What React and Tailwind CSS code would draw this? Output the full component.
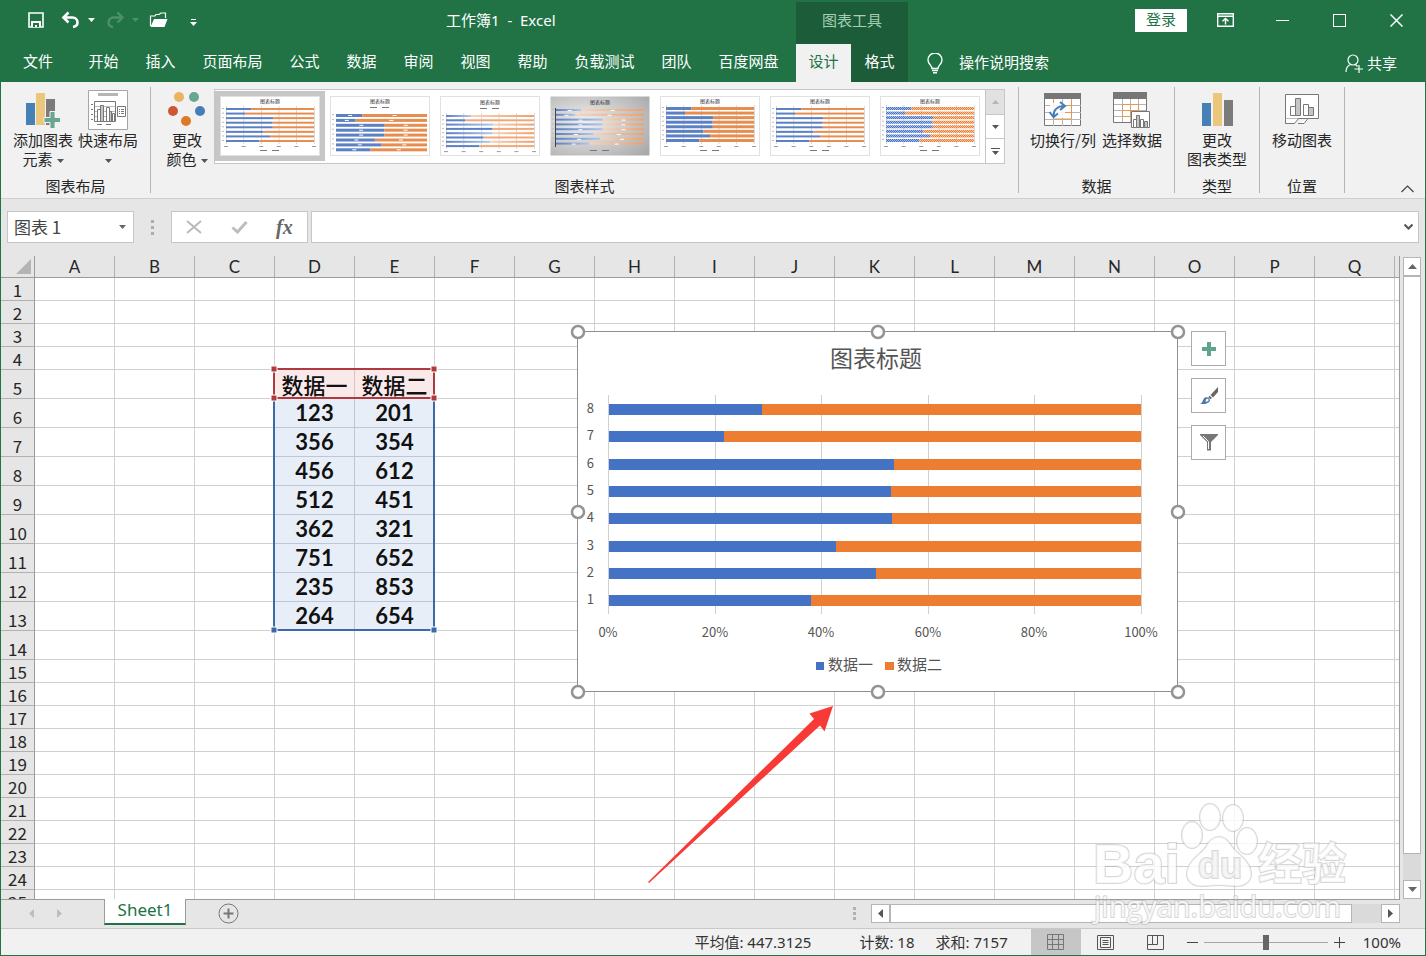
import React from "react";

const SERIES = [
    { id: 1, a: 123, b: 201 },
    { id: 2, a: 356, b: 354 },
    { id: 3, a: 456, b: 612 },
    { id: 4, a: 512, b: 451 },
    { id: 5, a: 362, b: 321 },
    { id: 6, a: 751, b: 652 },
    { id: 7, a: 235, b: 853 },
    { id: 8, a: 264, b: 654 },
];

const REVERSED = [...SERIES].reverse();

const COLUMNS = "ABCDEFGHIJKLMNOPQ".split("");
const ROWS = Array.from({ length: 25 }, (_, i) => i + 1);

const MENU = ["开始", "插入", "页面布局", "公式", "数据", "审阅", "视图", "帮助", "负载测试", "团队", "百度网盘"];

const share = (row) => row.a / (row.a + row.b);

const Caret = ({ className = "" }) => (
    <svg className={className} width="7" height="4" viewBox="0 0 7 4" fill="currentColor" aria-hidden="true">
        <path d="M0 0h7L3.5 4z" />
    </svg>
);

const TitleBar = () => (
    <div className="flex h-11 text-[15px] text-white">
        <div className="flex w-[795px] shrink-0 items-center pb-1 pl-[26px]">
            <button type="button" aria-label="保存" className="w-[18px]">
                <svg width="18" height="18" viewBox="0 0 18 18" fill="none" stroke="currentColor">
                    <path d="M2 2h14v14H2z" strokeWidth="1.600" />
                    <path d="M4 10h10v6H4z" fill="currentColor" stroke="none" />
                    <path d="M6 12h6v4h-2v-2H8v2H6z" fill="#217346" stroke="none" />
                </svg>
            </button>
            <button type="button" aria-label="撤消" className="ml-4 w-5">
                <svg width="20" height="18" viewBox="0 0 20 18" fill="none" stroke="currentColor" strokeWidth="2.600">
                    <path d="M7.500 1.500 2.500 6.500l5 5M3 6.500h8.500a5 5 0 0 1 5 5c0 2.500-1.500 4-4.500 4.500" />
                </svg>
            </button>
            <button type="button" aria-label="撤消选项" className="ml-[5px] flex w-2.5 justify-center">
                <Caret />
            </button>
            <button type="button" aria-label="恢复" className="ml-[9px] w-5 text-[#4d8f6b]">
                <svg width="20" height="18" viewBox="0 0 20 18" fill="none" stroke="currentColor" strokeWidth="2.400">
                    <path d="m12.500 1.500 5 5-5 5M17 6.500H8.500a5 5 0 0 0-5 5c0 2.500 1.500 4 4.500 4.500" />
                </svg>
            </button>
            <button type="button" aria-label="恢复选项" className="ml-[5px] flex w-2.5 justify-center text-[#4d8f6b]">
                <Caret />
            </button>
            <button type="button" aria-label="打开" className="ml-[9px] w-5">
                <svg width="20" height="18" viewBox="0 0 20 18" fill="none" stroke="currentColor" strokeWidth="1.200">
                    <path d="M1.500 15V5h4.500l1-1.500h3L12 2h4.500v5" />
                    <path d="M5 8h13.500l-3 8H1.500z" fill="currentColor" stroke="none" />
                </svg>
            </button>
            <button type="button" aria-label="自定义快速访问工具栏" className="ml-[19px] mt-1 flex w-2.5 flex-col items-center gap-0.5">
                <span className="h-px w-[5px] bg-white" />
                <Caret />
            </button>
            <h1 className="ml-[248px] whitespace-pre font-['Noto_Sans','Noto_Sans_CJK_SC',sans-serif]">{"工作簿1  -  Excel"}</h1>
        </div>
        <div className="mt-0.5 flex w-28 shrink-0 items-center justify-center bg-[#1c5c38] pb-1.5 text-[#a3cfb5]">图表工具</div>
        <div className="flex flex-1 items-center justify-end pb-1">
            <button type="button" className="mr-2.5 h-[23px] w-[52px] bg-white pb-0.5 leading-5 text-[#217346]">登录</button>
            <button type="button" aria-label="功能区显示选项" className="flex w-[57px] justify-center">
                <svg width="17" height="14" viewBox="0 0 17 14" fill="none" stroke="currentColor" strokeWidth="1.400">
                    <path d="M.7.700h15.600v12.600H.7zM.7 3.300h15.600M8.500 11.500V5.500M5.500 8.300l3-2.900 3 2.900" />
                </svg>
            </button>
            <button type="button" aria-label="最小化" className="flex w-[57px] justify-center">
                <span className="h-px w-[13px] bg-white" />
            </button>
            <button type="button" aria-label="最大化" className="flex w-[57px] justify-center">
                <span className="size-[13px] border border-white" />
            </button>
            <button type="button" aria-label="关闭" className="flex w-[57px] justify-center">
                <svg width="13" height="13" viewBox="0 0 13 13" stroke="currentColor" strokeWidth="1.500">
                    <path d="m.5.500 12 12M12.500.500l-12 12" />
                </svg>
            </button>
        </div>
    </div>
);

const MenuBar = () => (
    <nav className="flex h-[38px] text-[15px] text-white">
        <div className="flex w-[795px] shrink-0 pb-[3px]">
            <button type="button" className="w-[74px]">文件</button>
            {MENU.map((name) => (
                <button key={name} type="button" className={name.length > 2 ? "w-[87px]" : "w-[57px]"}>
                    {name}
                </button>
            ))}
        </div>
        <div className="flex w-28 shrink-0 bg-[#1c5c38]">
            <button type="button" className="w-[55px] bg-[#f1f1f1] pb-[3px] text-[#217346]">设计</button>
            <button type="button" className="flex-1 pb-[3px]">格式</button>
        </div>
        <div className="flex flex-1 items-center pl-[19px] pr-7">
            <svg width="16" height="21" viewBox="0 0 16 21" fill="none" stroke="currentColor" strokeWidth="1.400" aria-hidden="true">
                <path d="M5 15.500c0-3-4-4.500-4-8.500a7 7 0 0 1 14 0c0 4-4 5.500-4 8.500zM5 17.500h6M6 19.800h4" />
            </svg>
            <input
                type="text"
                aria-label="操作说明搜索"
                placeholder="操作说明搜索"
                className="ml-4 w-40 bg-transparent pb-0.5 outline-none placeholder:text-white"
            />
            <button type="button" className="ml-auto flex items-center gap-1">
                <svg width="18" height="19" viewBox="0 0 18 19" fill="none" stroke="currentColor" strokeWidth="1.200" aria-hidden="true">
                    <circle cx="8" cy="6" r="5" />
                    <path d="M1 18c0-4 2-6.500 4.500-7.500M10.500 10.500l2 2M14 11v8M9.500 15h8.500" />
                </svg>
                共享
            </button>
        </div>
    </nav>
);

const Thumb = ({ top = 13, step = 5, height = 2, titleY = 7, legendY = 56, axis = true, fill = "solid", labels = false, right = 94 }) => {
    const width = right - 6;
    const blue = fill === "hatch" ? "url(#hatchBlue)" : fill === "fade" || fill === "steel" ? "url(#fadeBlue)" : "#5b80c4";
    const orange = fill === "hatch" ? "url(#hatchOrange)" : fill === "fade" || fill === "steel" ? "url(#fadeOrange)" : "#e88d50";
    return (
        <svg width="100" height="60" viewBox="0 0 100 60" aria-hidden="true">
            <rect x="0.500" y="0.500" width="99" height="59" fill={fill === "steel" ? "url(#steel)" : "#fff"} stroke={fill === "steel" ? "none" : "#e1e1e1"} />
            {axis && [0, 1, 2, 3, 4, 5].map((n) => (
                <g key={n}>
                    <rect x={6 + (width / 5) * n} y={top - 2} width="0.500" height={step * 7 + height + 4} fill="#b5b5b5" />
                    <rect x={4 + (width / 5) * n} y={top + step * 7 + height + 4} width="4" height="1" fill="#999" />
                </g>
            ))}
            {fill === "steel" && <rect x="5" y="12" width="1" height="39" fill="#444" />}
            {REVERSED.map((row, i) => {
                const y = top + i * step;
                const cut = width * share(row);
                return (
                    <g key={row.id}>
                        <rect x="2" y={y} width="2" height="1" fill="#bbb" />
                        <rect x="6" y={y} width={cut} height={height} fill={fill === "fade" && i % 2 ? "#5b80c4" : blue} />
                        <rect x={6 + cut} y={y} width={width - cut} height={height} fill={fill === "fade" && i % 2 ? "#f0a878" : orange} />
                        {labels && (
                            <>
                                <rect x={5 + cut / 2} y={y + 1} width="4" height="1" fill="#fff" />
                                <rect x={4 + (cut + width) / 2} y={y + 1} width="4" height="1" fill="#fff" />
                            </>
                        )}
                    </g>
                );
            })}
            <text x="50" y={titleY} fontSize="5" textAnchor="middle" fill="#333">图表标题</text>
            <rect x="40" y={legendY - 2} width="7" height="1" fill="#777" />
            <rect x="52" y={legendY - 2} width="7" height="1" fill="#777" />
        </svg>
    );
};

const THUMBS = [
    { top: 12, step: 4.570, height: 2 },
    { top: 18, step: 4.900, height: 3, legendY: 13, axis: false, labels: true, right: 97 },
    { top: 19, step: 4.300, height: 2, titleY: 8, legendY: 14, fill: "fade" },
    { top: 13, step: 4.800, height: 2, titleY: 8, fill: "steel", axis: false, labels: true },
    { top: 11, step: 4.570, height: 3 },
    { top: 12, step: 4.570, height: 2 },
    { top: 11, step: 4.570, height: 3, fill: "hatch" },
];

const RibbonGroup = ({ title, className = "", children }) => (
    <section className={`flex shrink-0 flex-col border-r border-[#b5b5b5] pt-0.5 ${className}`}>
        <div className="flex flex-1 items-start justify-center">{children}</div>
        <h2 className="text-center leading-[14px]">{title}</h2>
    </section>
);

const RibbonButton = ({ icon, lines, caret = false, className = "w-[62px]" }) => (
    <button type="button" className={`flex shrink-0 flex-col items-center ${className}`}>
        <span className="flex h-[41px] items-center justify-center">{icon}</span>
        {lines.map((line, i) => (
            <span key={line} className="flex h-[19px] items-center gap-1 whitespace-nowrap leading-[19px]">
                {line}
                {caret && i === lines.length - 1 && <Caret className="mt-1 text-[#555]" />}
            </span>
        ))}
    </button>
);

const AddElementIcon = () => (
    <svg width="34" height="38" viewBox="0 0 34 38">
        <path fill="#4680b5" d="M0 12h9v22H0z" />
        <path fill="#ebc77c" d="M10 2h9v32h-9z" />
        <path fill="#7b7b7b" d="M20 8h9v26h-9z" />
        <path fill="#69a690" stroke="#f1f1f1" d="M24 20.500h5v6h5.500v5H29v6h-5v-6h-6v-5h6z" />
    </svg>
);

const QuickLayoutIcon = () => (
    <svg width="40" height="40" viewBox="0 0 40 40" fill="none" stroke="#777">
        <path fill="#fff" stroke="#a5a5a5" d="M.5.500h39v39H.5z" />
        <path fill="#b5b5b5" stroke="none" d="M10 3h20v3H10z" />
        <path d="M6.500 11.500h21v20h-21zM3 14.500h2M3 19.500h2M3 24.500h2M3 29.500h2M9 34.500h5M18 34.500h5" />
        <path stroke="#bbb" d="M7 16.500h20M7 21.500h20M7 26.500h20" />
        <path fill="#fff" d="M9.500 19.500h3v12h-3zM18.500 17.500h3v14h-3zM24.500 23.500h2v8h-2z" />
        <path fill="#c5c5c5" d="M12.500 15.500h3v16h-3zM21.500 21.500h2v10h-2z" />
        <path fill="#fff" d="M29.500 16.500h8v10h-8zM31 19.500h1M33 19.500h3M31 21.500h1M33 21.500h3M31 23.500h1M33 23.500h3" />
    </svg>
);

const ColorsIcon = () => (
    <svg width="38" height="36" viewBox="0 0 38 36">
        <circle cx="11" cy="5" r="5" fill="#e8b45f" />
        <circle cx="26" cy="5" r="5" fill="#69a690" />
        <circle cx="5" cy="19" r="5" fill="#ce5733" />
        <circle cx="32" cy="19" r="5" fill="#457eb8" />
        <circle cx="18" cy="29" r="5" fill="#dc7a28" />
    </svg>
);

const SwitchIcon = () => (
    <svg width="38" height="34" viewBox="0 0 38 34" fill="none">
        <path fill="#fff" stroke="#777" d="M.5.500h36v32H.5z" />
        <path fill="#777" d="M0 0h37v6H0z" />
        <path stroke="#b5b5b5" d="M1 12.500h36M1 19.500h36M1 26.500h36M9.500 6v27M18.500 6v27M27.500 6v27" />
        <path stroke="#e09a55" d="M9.500 6v20h18V6M18.500 19.500h9M18.500 12.500h9" />
        <path fill="#fff" d="M6 10h15v15H6z" opacity="0.850" />
        <path stroke="#457eb8" strokeWidth="2" d="M9.500 23c0-6 4-10 11-10M16 9l5 4-5 4M5.500 19l4 5 4.500-3.500" />
    </svg>
);

const SelectDataIcon = () => (
    <svg width="38" height="38" viewBox="0 0 38 38" fill="none">
        <path fill="#fff" stroke="#777" d="M.5 1.500h33v30H.5z" />
        <path fill="#777" d="M0 1h34v7H0z" />
        <path stroke="#b5b5b5" d="M1 13.500h32M1 19.500h32M1 25.500h32M9.500 8v23M17.500 8v23M25.500 8v23" />
        <path stroke="#e09a55" d="M9.500 13.500h16v6h-16zM9.500 19.500v6h8M17.500 13.500v12" />
        <path fill="#fff" stroke="#777" d="M18.500 20.500h18v16h-18z" />
        <path fill="#fff" stroke="#777" d="M20.500 28.500h3v8h-3zM27.500 28.500h3v8h-3z" />
        <path fill="#c5c5c5" stroke="#777" d="M23.500 24.500h3v12h-3zM31.500 30.500h3v6h-3z" />
    </svg>
);

const ChangeTypeIcon = () => (
    <svg width="31" height="34" viewBox="0 0 31 34">
        <path fill="#4680b5" d="M0 10h9v23H0z" />
        <path fill="#ebc77c" d="M11 0h9v33h-9z" />
        <path fill="#7b7b7b" d="M22 7h9v26h-9z" />
    </svg>
);

const MoveChartIcon = () => (
    <svg width="34" height="31" viewBox="0 0 34 31" fill="none" stroke="#777">
        <path fill="#fff" d="M.5.500h33v24H.5z" />
        <path fill="#fff" d="M5.500 12.500h5v9h-5zM18.500 10.500h5v11h-5z" />
        <path fill="#c5c5c5" d="M10.500 4.500h5v17h-5zM23.500 13.500h5v8h-5z" />
        <path fill="#fff" d="M.5 24.500v5h9l4-5M13 29.500h6l4-5" />
    </svg>
);

const Ribbon = () => (
    <div className="flex h-[117px] border-b border-[#cfcfcf] bg-[#f1f1f1] py-[5px] text-[15px] text-[#262626]">
        <RibbonGroup title="图表布局" className="w-[150px]">
            <div className="flex gap-[3px]">
                <RibbonButton icon={<AddElementIcon />} lines={["添加图表", "元素"]} caret />
                <RibbonButton icon={<QuickLayoutIcon />} lines={["快速布局", ""]} caret />
            </div>
        </RibbonGroup>
        <RibbonGroup title="图表样式" className="w-[868px]">
            <div className="flex pr-1">
                <RibbonButton icon={<ColorsIcon />} lines={["更改", "颜色"]} caret className="w-[54px]" />
                <div className="flex h-[75px] border border-[#c6c6c6] bg-white">
                    <div className="flex pt-px">
                        {THUMBS.map((item, i) => (
                            <button
                                key={i}
                                type="button"
                                aria-label={`样式 ${i + 1}`}
                                className={`h-[70px] w-[110px] p-[5px] ${i === 0 ? "bg-[#c6c6c6]" : ""}`}
                            >
                                <Thumb {...item} />
                            </button>
                        ))}
                    </div>
                    <div className="flex w-[19px] flex-col border-l border-[#c6c6c6] text-[#555]">
                        <button type="button" aria-label="上一行" className="flex flex-1 items-center justify-center bg-[#e1e1e1] text-[#b5b5b5]">
                            <Caret className="rotate-180" />
                        </button>
                        <button type="button" aria-label="下一行" className="flex flex-1 items-center justify-center border-y border-[#c6c6c6]">
                            <Caret />
                        </button>
                        <button type="button" aria-label="更多样式" className="flex flex-1 flex-col items-center justify-center gap-0.5">
                            <span className="h-px w-[9px] bg-[#555]" />
                            <Caret />
                        </button>
                    </div>
                </div>
            </div>
        </RibbonGroup>
        <RibbonGroup title="数据" className="w-[156px]">
            <div className="flex gap-[5px]">
                <RibbonButton icon={<SwitchIcon />} lines={["切换行/列"]} className="w-[66px]" />
                <RibbonButton icon={<SelectDataIcon />} lines={["选择数据"]} />
            </div>
        </RibbonGroup>
        <RibbonGroup title="类型" className="w-[85px]">
            <RibbonButton icon={<ChangeTypeIcon />} lines={["更改", "图表类型"]} />
        </RibbonGroup>
        <RibbonGroup title="位置" className="w-[85px]">
            <RibbonButton icon={<MoveChartIcon />} lines={["移动图表"]} />
        </RibbonGroup>
        <button type="button" aria-label="折叠功能区" className="ml-auto mr-[11px] self-end">
            <svg width="13" height="8" viewBox="0 0 13 8" fill="none" stroke="#444" strokeWidth="1.200">
                <path d="m.5 7 6-6 6 6" />
            </svg>
        </button>
    </div>
);

const FormulaBar = () => (
    <div className="flex h-[57px] items-start bg-[#e6e6e6] pl-1.5 pr-1.5 pt-3">
        <div className="flex h-8 w-[127px] items-center border border-[#c6c6c6] bg-white pl-1.5 pr-[7px]">
            <input aria-label="名称框" defaultValue="图表 1" className="w-full min-w-0 text-[17px] text-[#444] outline-none" />
            <button type="button" aria-label="名称列表">
                <Caret className="text-[#666]" />
            </button>
        </div>
        <div className="flex h-8 w-[37px] flex-col items-center justify-center gap-[3px]">
            <span className="size-[3px] bg-[#adadad]" />
            <span className="size-[3px] bg-[#adadad]" />
            <span className="size-[3px] bg-[#adadad]" />
        </div>
        <div className="flex h-8 w-[137px] items-center justify-around border border-[#c6c6c6] bg-white">
            <button type="button" aria-label="取消">
                <svg width="16" height="14" viewBox="0 0 16 14" stroke="#b9b9b9" strokeWidth="2">
                    <path d="m1 1 14 12M15 1 1 13" />
                </svg>
            </button>
            <button type="button" aria-label="输入">
                <svg width="17" height="13" viewBox="0 0 17 13" fill="none" stroke="#bdbdbd" strokeWidth="3">
                    <path d="m1.500 6.500 5 4.500 9-10" />
                </svg>
            </button>
            <button type="button" aria-label="插入函数" className="font-['Liberation_Serif',serif] text-[20px] font-bold italic leading-6 text-[#666]">fx</button>
        </div>
        <div className="ml-[3px] flex h-8 flex-1 items-center border border-[#c6c6c6] bg-white pr-[5px]">
            <input aria-label="编辑栏" className="h-full flex-1 px-2 outline-none" />
            <button type="button" aria-label="展开编辑栏">
                <svg width="9" height="6" viewBox="0 0 9 6" fill="none" stroke="#555" strokeWidth="2">
                    <path d="m.5.500 4 4 4-4" />
                </svg>
            </button>
        </div>
    </div>
);

const cellContent = (row, col) => {
    if (row === 5) return col === "D" ? "数据一" : "数据二";
    const item = SERIES[row - 6];
    return col === "D" ? item.a : item.b;
};

const Sheet = () => (
    <table className="w-full table-fixed border-separate border-spacing-0">
        <colgroup>
            <col className="w-[34px]" />
            {COLUMNS.map((col) => (
                <col key={col} className="w-20" />
            ))}
            <col />
        </colgroup>
        <thead>
            <tr className="bg-[#e6e6e6] text-[17px] leading-5 text-[#262626]">
                <th className="h-[22px] border-b border-r border-[#9b9b9b] p-0">
                    <svg className="ml-auto mr-[3px]" width="15" height="15" viewBox="0 0 15 15" aria-hidden="true">
                        <path fill="#b4b4b4" d="M15 0v15H0z" />
                    </svg>
                </th>
                {COLUMNS.map((col) => (
                    <th key={col} scope="col" className="h-[22px] border-b border-r border-b-[#9b9b9b] border-r-[#b1b1b1] p-0 align-bottom font-['Lato',sans-serif] font-normal">
                        {col}
                    </th>
                ))}
                <th className="h-[22px] border-b border-[#9b9b9b] p-0" />
            </tr>
        </thead>
        <tbody>
            {ROWS.map((row) => {
                const tall = row >= 5 && row <= 14;
                return (
                    <tr key={row} className={tall ? "h-[29px]" : "h-[23px]"}>
                        <th scope="row" className="border-b border-r border-b-[#b1b1b1] border-r-[#9b9b9b] bg-[#e6e6e6] p-0 align-bottom text-[17px] font-normal leading-5 text-[#262626]">
                            {row}
                        </th>
                        {COLUMNS.map((col) => {
                            const filled = (col === "D" || col === "E") && row >= 5 && row <= 13;
                            if (!filled) return <td key={col} className="border-b border-r border-[#d0d0d0] p-0" />;
                            return (
                                <td
                                    key={col}
                                    className={`border-b border-r p-0 text-center text-[22px] leading-7 text-[#111] ${
                                        row === 5
                                            ? "border-[#dcc4c4] bg-[#fae9e9] font-medium"
                                            : "border-[#bcc6d6] bg-[#e7eef8] font-['Lato',sans-serif] font-bold"
                                    }`}
                                >
                                    {cellContent(row, col)}
                                </td>
                            );
                        })}
                        <td className="border-b border-[#d0d0d0] p-0" />
                    </tr>
                );
            })}
        </tbody>
    </table>
);

const RangeOutline = () => (
    <svg className="absolute left-[269px] top-[109px]" width="168" height="269" viewBox="0 0 168 269" fill="none" aria-hidden="true">
        <path stroke="#3a6ba8" strokeWidth="2" d="M4 34v231h160V34" />
        <path stroke="#b0383f" strokeWidth="2" d="M4 4h160v29H4z" />
        {[[4, 4], [164, 4], [4, 33], [164, 33]].map(([x, y]) => (
            <rect key={`${x}-${y}`} x={x - 3} y={y - 3} width="6" height="6" fill="#b0383f" stroke="#fff" />
        ))}
        {[[4, 265], [164, 265]].map(([x, y]) => (
            <rect key={`${x}-${y}`} x={x - 3} y={y - 3} width="6" height="6" fill="#3a6ba8" stroke="#fff" />
        ))}
    </svg>
);

const HANDLES = [[1, 1], [301, 1], [601, 1], [1, 181], [601, 181], [1, 361], [301, 361], [601, 361]];

const Chart = () => (
    <div className="absolute left-[576px] top-[75px] flex items-start gap-[13px]">
        <svg className="overflow-visible" width="601" height="361" viewBox="0 0 601 361" fill="#555" role="img" aria-label="图表标题">
            <rect x="0.500" y="0.500" width="600" height="360" fill="#fff" stroke="#8f8f8f" />
            <text x="299" y="36" fontSize="23" textAnchor="middle">图表标题</text>
            {[0, 20, 40, 60, 80, 100].map((tick) => {
                const x = 31 + Math.round(tick * 5.330);
                return (
                    <g key={tick}>
                        <rect x={x} y="64" width="1" height="219" fill="#d0d0d0" />
                        <text x={x} y="306" fontSize="13" textAnchor="middle">{tick}%</text>
                    </g>
                );
            })}
            {REVERSED.map((row, i) => {
                const y = Math.round(73 + i * 27.300);
                const cut = Math.round(532 * share(row));
                return (
                    <g key={row.id}>
                        <text x="17" y={y + 9} fontSize="13" textAnchor="end">{row.id}</text>
                        <rect x="32" y={y} width={cut} height="11" fill="#4472c4" />
                        <rect x={32 + cut} y={y} width={532 - cut} height="11" fill="#ed7d31" />
                    </g>
                );
            })}
            <rect x="239" y="331" width="8" height="8" fill="#4472c4" />
            <text x="251" y="339" fontSize="15">数据一</text>
            <rect x="308" y="331" width="9" height="8" fill="#ed7d31" />
            <text x="320" y="339" fontSize="15">数据二</text>
            {HANDLES.map(([x, y]) => (
                <circle key={`${x}-${y}`} cx={x} cy={y} r="6" fill="#fff" stroke="#949494" strokeWidth="2.500" />
            ))}
        </svg>
        <div className="flex flex-col gap-3">
            <button type="button" aria-label="图表元素" className="flex size-[35px] items-center justify-center border border-[#ababab] bg-white">
                <svg width="14" height="14" viewBox="0 0 14 14" fill="#5fa58e">
                    <path d="M5 0h4v5h5v4H9v5H5V9H0V5h5z" />
                </svg>
            </button>
            <button type="button" aria-label="图表样式" className="flex size-[35px] items-center justify-center border border-[#ababab] bg-white">
                <svg width="18" height="18" viewBox="0 0 18 18">
                    <path fill="#666" d="M18 0v5l-5 5.500-2.500-2.500zM9.700 8.700l2.300 2.300-1.500 1.300-2.300-2z" />
                    <path fill="#4a78ab" d="M0 17c3-1 2.500-5 5-6.500 2-1 5 .5 5 3C9 16.500 4 17.500 0 17z" />
                    <path fill="#fff" d="M6 12.500c1-1.300 3-.500 2.500 1-.500 1-2 1.500-3 1z" />
                </svg>
            </button>
            <button type="button" aria-label="图表筛选器" className="flex size-[35px] items-center justify-center border border-[#ababab] bg-white">
                <svg width="18" height="17" viewBox="0 0 18 17">
                    <path fill="#777" d="M0 0h18v1l-7 7v8.500H7V8L0 1z" />
                    <path fill="none" stroke="#fff" d="M3 2l5.500 5.500V15" />
                </svg>
            </button>
        </div>
    </div>
);

const RedArrow = () => (
    <svg className="absolute left-[646px] top-[448px]" width="190" height="182" viewBox="0 0 190 182" aria-hidden="true">
        <path fill="#f83a37" d="M186 2 162.500 9.500l4.500 5.500L1 178l1 1L173 21.500l4.500 6z" />
    </svg>
);

const VerticalScroll = () => (
    <div className="flex w-[22px] shrink-0 flex-col pr-1 pt-px">
        <button type="button" aria-label="向上滚动" className="flex h-[19px] items-center justify-center border border-[#b5b5b5] bg-white text-[#666]">
            <svg width="9" height="5" viewBox="0 0 9 5" fill="currentColor"><path d="M4.500 0 9 5H0z" /></svg>
        </button>
        <div className="flex flex-1 flex-col bg-[#dadada]">
            <div className="mb-[26px] flex-1 border border-[#b5b5b5] bg-white" />
        </div>
        <button type="button" aria-label="向下滚动" className="flex h-[19px] items-center justify-center border border-[#b5b5b5] bg-white text-[#666]">
            <svg width="9" height="5" viewBox="0 0 9 5" fill="currentColor"><path d="M0 0h9L4.500 5z" /></svg>
        </button>
    </div>
);

const SheetTabs = () => (
    <div className="flex h-[29px] bg-[#e6e6e6]">
        <div className="flex w-[103px] items-center gap-[23px] border-t border-[#9b9b9b] pb-0.5 pl-7 text-[#bdbdbd]">
            <button type="button" aria-label="上一个工作表">
                <svg width="5" height="9" viewBox="0 0 5 9" fill="currentColor"><path d="M5 0v9L0 4.500z" /></svg>
            </button>
            <button type="button" aria-label="下一个工作表">
                <svg width="5" height="9" viewBox="0 0 5 9" fill="currentColor"><path d="M0 0v9l5-4.500z" /></svg>
            </button>
        </div>
        <button type="button" className="h-[26px] w-[82px] border-x border-b-2 border-x-[#9b9b9b] border-b-[#217346] bg-white pb-0.5 font-['Noto_Sans',sans-serif] text-[17px] leading-5 text-[#217346]">
            Sheet1
        </button>
        <div className="flex flex-1 items-center border-t border-[#9b9b9b] pb-0.5">
            <button type="button" aria-label="新工作表" className="ml-8">
                <svg width="21" height="21" viewBox="0 0 21 21" fill="none" stroke="#777">
                    <circle cx="10.500" cy="10.500" r="9.500" />
                    <path strokeWidth="2" d="M10.500 5.500v10M5.500 10.500h10" />
                </svg>
            </button>
            <div className="ml-auto flex h-5 w-[547px] items-center">
                <div className="mr-[15px] flex flex-col gap-[2px]">
                    <span className="size-[3px] bg-[#b1b1b1]" />
                    <span className="size-[3px] bg-[#b1b1b1]" />
                    <span className="size-[3px] bg-[#b1b1b1]" />
                </div>
                <button type="button" aria-label="向左滚动" className="flex h-[19px] w-[19px] items-center justify-center border border-[#b5b5b5] bg-white text-[#555]">
                    <svg width="5" height="9" viewBox="0 0 5 9" fill="currentColor"><path d="M5 0v9L0 4.500z" /></svg>
                </button>
                <div className="flex h-[19px] flex-1 bg-[#dadada]">
                    <div className="mr-[29px] flex-1 border border-[#b5b5b5] bg-white" />
                </div>
                <button type="button" aria-label="向右滚动" className="flex h-[19px] w-[19px] items-center justify-center border border-[#b5b5b5] bg-white text-[#555]">
                    <svg width="5" height="9" viewBox="0 0 5 9" fill="currentColor"><path d="M0 0v9l5-4.500z" /></svg>
                </button>
            </div>
        </div>
        <div className="w-[25px]" />
    </div>
);

const StatusBar = () => (
    <footer className="flex h-[27px] items-center justify-end border-t border-[#c9c9c9] bg-[#f1f1f1] pr-6 font-['Noto_Sans','Noto_Sans_CJK_SC',sans-serif] text-[15px] text-[#333]">
        <span className="mr-12">平均值: 447.3125</span>
        <span className="mr-[21px]">计数: 18</span>
        <span className="mr-[23px]">求和: 7157</span>
        <button type="button" aria-label="普通" className="flex h-full w-[50px] items-center justify-center bg-[#c6c6c6]">
            <svg width="17" height="17" viewBox="0 0 17 17" fill="none" stroke="#777">
                <path d="M.5.500h16v15H.5zM.5 5.500h16M.5 10.500h16M5.500.500v15M11.500.500v15" />
            </svg>
        </button>
        <button type="button" aria-label="页面布局" className="flex w-[50px] justify-center">
            <svg width="17" height="15" viewBox="0 0 17 15" fill="none" stroke="#555">
                <path d="M.5.500h16v14H.5zM3.500 2.500h10v10h-10zM5.500 5.500h6M5.500 7.500h6M5.500 9.500h6" />
            </svg>
        </button>
        <button type="button" aria-label="分页预览" className="flex w-[50px] justify-center">
            <svg width="17" height="15" viewBox="0 0 17 15" fill="none" stroke="#555">
                <path d="M.5.500h16v14H.5zM5.500.500v9M.5 9.500h10v-9" />
            </svg>
        </button>
        <button type="button" aria-label="缩小" className="ml-1.5 flex h-4 w-[11px] items-center">
            <span className="h-px w-full bg-[#444]" />
        </button>
        <input
            type="range"
            aria-label="缩放"
            defaultValue="50"
            className="mx-1.5 h-4 w-[124px] appearance-none bg-transparent [&::-webkit-slider-runnable-track]:h-px [&::-webkit-slider-runnable-track]:bg-[#a5a5a5] [&::-webkit-slider-thumb]:-mt-[7px] [&::-webkit-slider-thumb]:h-[15px] [&::-webkit-slider-thumb]:w-1.5 [&::-webkit-slider-thumb]:appearance-none [&::-webkit-slider-thumb]:bg-[#666]"
        />
        <button type="button" aria-label="放大" className="w-[11px]">
            <svg width="11" height="11" viewBox="0 0 11 11" stroke="#444"><path d="M5.500 0v11M0 5.500h11" /></svg>
        </button>
        <span className="ml-[18px]">100%</span>
    </footer>
);

const Watermark = () => (
    <svg
        className="pointer-events-none absolute bottom-[26px] right-[73px]"
        width="264"
        height="128"
        viewBox="0 0 264 128"
        fill="#fff"
        fillOpacity="0.800"
        stroke="#b0b0b0"
        strokeOpacity="0.500"
        strokeWidth="2"
        fontFamily="'Liberation Sans', 'Noto Sans CJK SC', sans-serif"
        fontWeight="700"
        paintOrder="stroke"
        aria-hidden="true"
    >
        <text x="5" y="82" fontSize="56">Bai</text>
        <ellipse cx="104" cy="34" rx="10" ry="13" />
        <ellipse cx="122" cy="16" rx="10" ry="13" />
        <ellipse cx="145" cy="17" rx="10" ry="13" />
        <ellipse cx="159" cy="40" rx="10" ry="13" />
        <path d="M131 36c-6 0-10 4-13 10s-19 14-19 27c0 8 7 12 14 12 6 0 12-1 18-1s12 1 18 1c7 0 14-4 14-12 0-13-15-21-19-27s-7-10-13-10z" />
        <text x="110" y="77" fontSize="36" fill="#f4f4f4">du</text>
        <text x="170" y="79" fontSize="44">经验</text>
        <text x="6" y="116" fontSize="29" fontWeight="400" fontFamily="'Open Sans', sans-serif">jingyan.baidu.com</text>
    </svg>
);

const ThumbFills = () => (
    <svg width="0" height="0" className="absolute" aria-hidden="true">
        <defs>
            <linearGradient id="fadeBlue">
                <stop offset="0" stopColor="#5b80c4" />
                <stop offset="1" stopColor="#b4c7e7" />
            </linearGradient>
            <linearGradient id="fadeOrange">
                <stop offset="0" stopColor="#f8d3b8" />
                <stop offset="1" stopColor="#eda06c" />
            </linearGradient>
            <radialGradient id="steel" cx="0.350" cy="0.450" r="0.800">
                <stop offset="0" stopColor="#f0f0f0" />
                <stop offset="1" stopColor="#a9a9a9" />
            </radialGradient>
            <pattern id="hatchBlue" width="2" height="2" patternUnits="userSpaceOnUse">
                <path fill="#a9bde2" d="M0 0h2v2H0z" />
                <path stroke="#4472c4" d="m0 2 2-2" />
            </pattern>
            <pattern id="hatchOrange" width="2" height="2" patternUnits="userSpaceOnUse">
                <path fill="#f6c3a0" d="M0 0h2v2H0z" />
                <path stroke="#ed7d31" d="m0 2 2-2" />
            </pattern>
        </defs>
    </svg>
);

const App = () => {
    return (
        <div className="relative flex h-screen flex-col overflow-hidden border-x border-b border-[#217346] bg-[#217346] font-['Noto_Sans_CJK_SC',sans-serif]">
            <ThumbFills />
            <TitleBar />
            <MenuBar />
            <Ribbon />
            <FormulaBar />
            <main className="flex min-h-0 flex-1 bg-[#e6e6e6]">
                <div className="relative mr-[3px] min-w-0 flex-1 overflow-hidden border-r border-[#9b9b9b] bg-white">
                    <Sheet />
                    <RangeOutline />
                    <Chart />
                    <RedArrow />
                </div>
                <VerticalScroll />
            </main>
            <SheetTabs />
            <StatusBar />
            <Watermark />
        </div>
    );
};

export default App;
